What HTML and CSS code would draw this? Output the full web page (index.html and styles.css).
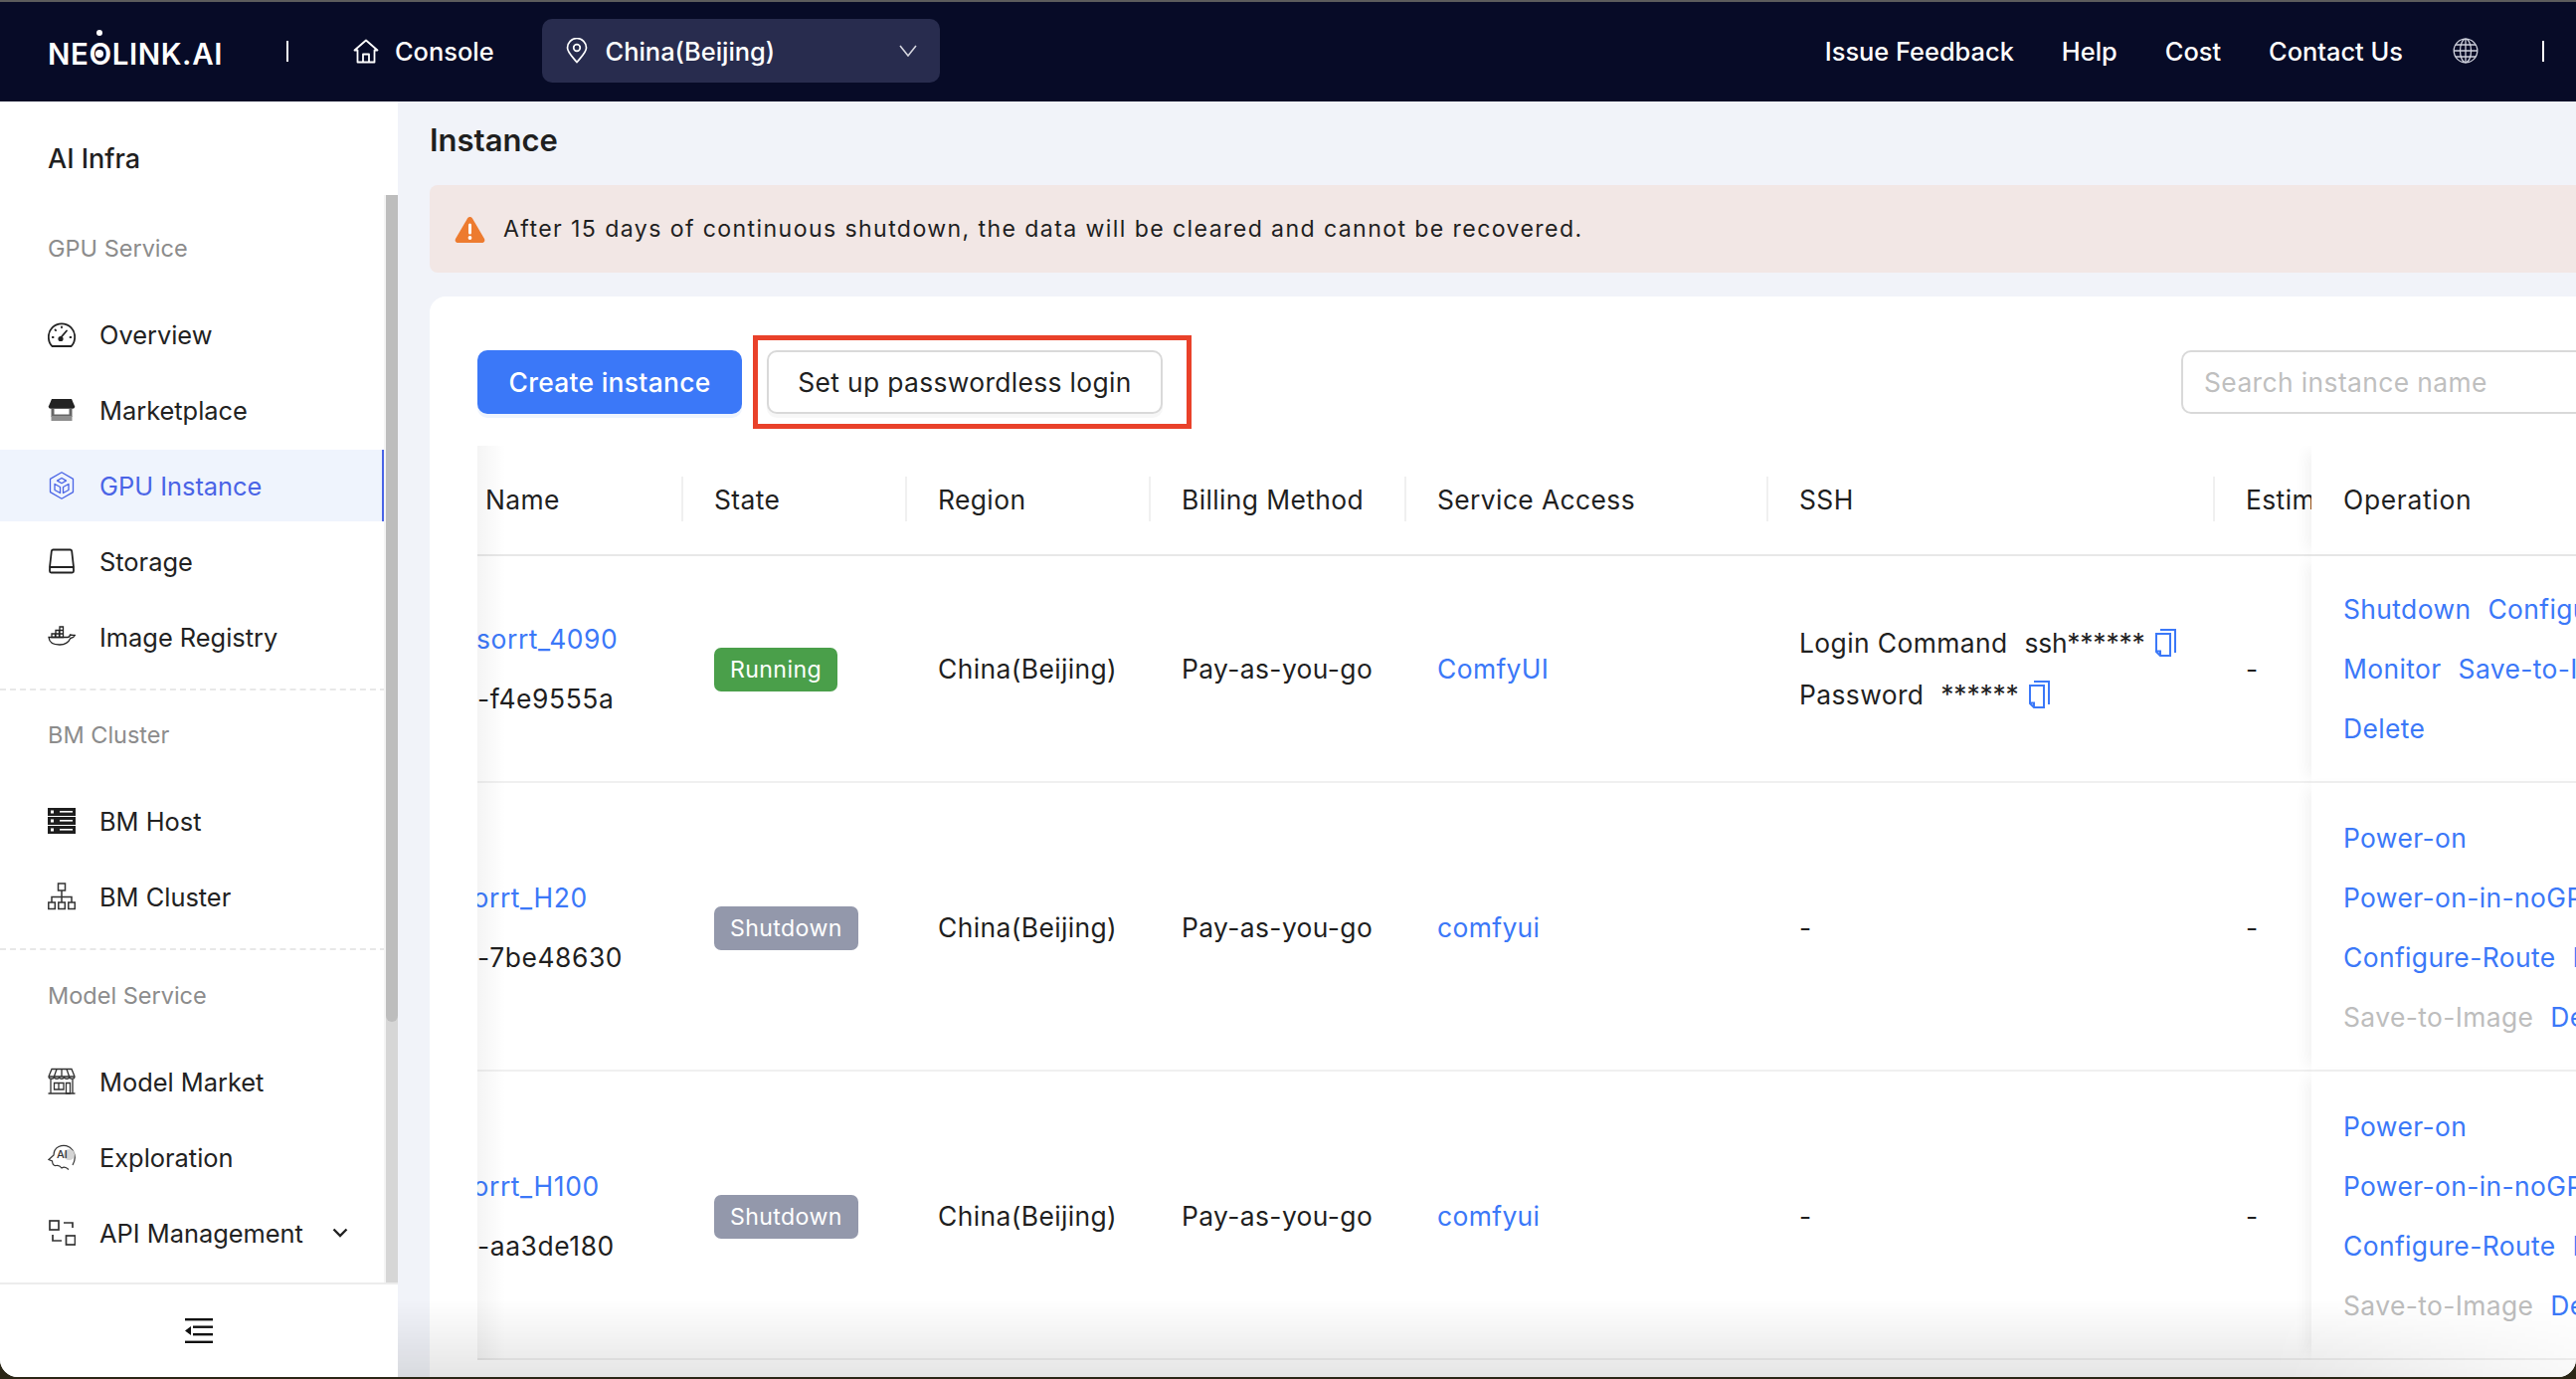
FILE: index.html
```html
<!DOCTYPE html>
<html lang="en">
<head>
<meta charset="utf-8">
<title>Instance</title>
<link rel="stylesheet" href="styles.css">
</head>
<body>
<div class="shell">
  <header class="topbar">
    <div class="logo">NEOLINK.AI<span class="logo-dot-top"></span><span class="logo-dot-mid"></span></div>
    <span class="vline vline-a"></span>
    <a class="console">
      <svg class="ic-home" viewBox="0 0 26 25" fill="none" stroke="#fff" stroke-width="1.8" stroke-linejoin="round"><path d="M1.5 11.5 13 1.5l11.5 10H21.5v12h-17v-12z"/><path d="M10 23.5v-8h6v8"/></svg>
      <span>Console</span>
    </a>
    <div class="region-select">
      <svg class="ic-pin" viewBox="0 0 22 26" fill="none" stroke="#fff" stroke-width="1.7"><path d="M11 24.5C6 18.5 1.5 14.5 1.5 10a9.500 9.500 0 0 1 19 0c0 4.500-4.500 8.500-9.500 14.500z"/><circle cx="11" cy="10" r="3.300"/></svg>
      <span class="region-text">China(Beijing)</span>
      <svg class="ic-chev" viewBox="0 0 18 12" fill="none" stroke="#d5d6de" stroke-width="1.600"><path d="M1 1l8 10 8-10"/></svg>
    </div>
    <nav class="topnav">
      <a>Issue Feedback</a><a>Help</a><a>Cost</a><a>Contact Us</a>
      <svg class="ic-globe" viewBox="0 0 26 26" fill="none" stroke="#cfd1dc" stroke-width="1.300"><circle cx="13" cy="13" r="11.800"/><ellipse cx="13" cy="13" rx="5.500" ry="11.800"/><path d="M13 1.200v23.600M1.200 13h23.600M3 7h20M3 19h20"/></svg>
      <span class="vline vline-b"></span>
    </nav>
  </header>

  <div class="body-row">
    <aside class="sidebar">
      <div class="side-title">AI Infra</div>
      <div class="side-scroll">
        <div class="menu">
          <section class="group group-first">
            <h3 class="group-label">GPU Service</h3>
            <a class="item">
              <svg class="ic" viewBox="0 0 28 28" fill="none" stroke="#222" stroke-width="1.800" stroke-linecap="round"><path d="M4.500 26h19c2.800-2.500 3.700-5.500 3.700-9.500a13.200 13.200 0 0 0-26.400 0c0 4 .9 7 3.700 9.500z"/><path d="M12.500 18 19 10.500M14 6.500v.8M7.500 9.500l.6.600M4.800 17h.8M22.500 17h.8"/><circle cx="13" cy="18.500" r="1.700" fill="#222"/></svg>
              <span>Overview</span>
            </a>
            <a class="item">
              <svg class="ic" viewBox="0 0 28 28"><path d="M4 3h20l3.200 7.500c0 1.500-1 2.200-2.200 2.200H3c-1.200 0-2.200-.7-2.200-2.200z" fill="#222"/><path d="M3.500 13h3v5.500h15V13h3v8h-21z" fill="#666"/><rect x="3.500" y="20" width="21" height="5" fill="#8e8e8e"/></svg>
              <span>Marketplace</span>
            </a>
            <a class="item active">
              <svg class="ic" viewBox="0 0 28 28" fill="none" stroke="#4a64e6" stroke-width="1.300" stroke-linejoin="round"><path d="M14 .8 25.500 7.400v13.200L14 27.200 2.500 20.600V7.400z"/><path d="M14 6.500l4.500 2.600L14 11.700 9.500 9.100zM7 12.500l5.500 3v6L7 18.500zM21 12.500l-5.500 3v6l5.500-3z"/></svg>
              <span>GPU Instance</span>
            </a>
            <a class="item">
              <svg class="ic" viewBox="0 0 28 28" fill="none" stroke="#222" stroke-width="1.800" stroke-linejoin="round"><path d="M5.500 2.500h17c1 0 1.500.5 1.700 1.500l1.800 16H2L3.800 4c.2-1 .7-1.500 1.700-1.500z"/><rect x="2" y="20" width="24" height="5.500" rx="1.500"/></svg>
              <span>Storage</span>
            </a>
            <a class="item">
              <svg class="ic" viewBox="0 0 28 28" fill="none" stroke="#222" stroke-width="1.300"><path d="M1 14.500h19c1.500 0 2.200-1 2.500-2.500 1.500.3 3.500.3 4.800.5-1 2.200-2.800 2.800-4.500 3-1.800 4-5.500 6.500-10.800 6.500C6 22 1.500 20 1 14.500z"/><path d="M4 11h3.500v3.500H4zM8 11h3.500v3.500H8zM12 11h3.500v3.500H12zM8 7.500h3.500V11H8zM12 7.500h3.500V11H12zM12 4h3.500v3.500H12z"/></svg>
              <span>Image Registry</span>
            </a>
          </section>
          <section class="group">
            <h3 class="group-label">BM Cluster</h3>
            <a class="item">
              <svg class="ic" viewBox="0 0 28 26"><g fill="#1e1e1e"><rect width="28" height="8" y="0"/><rect width="28" height="8" y="9"/><rect width="28" height="8" y="18"/></g><g fill="#fff"><rect x="3" y="2.500" width="3" height="3"/><rect x="12" y="3" width="13" height="1.600"/><rect x="3" y="11.500" width="3" height="3"/><rect x="12" y="12" width="13" height="1.600"/><rect x="3" y="20.500" width="3" height="3"/><rect x="12" y="21" width="13" height="1.600"/></g></svg>
              <span>BM Host</span>
            </a>
            <a class="item">
              <svg class="ic" viewBox="0 0 28 28" fill="none" stroke="#333" stroke-width="1.500"><rect x="10.500" y="1" width="7" height="7"/><path d="M14 8v12M4 20v-5.500h20V20"/><rect x=".8" y="20" width="6.500" height="6.500"/><rect x="10.800" y="20" width="6.500" height="6.500"/><rect x="20.800" y="20" width="6.500" height="6.500"/></svg>
              <span>BM Cluster</span>
            </a>
          </section>
          <section class="group group-last">
            <h3 class="group-label">Model Service</h3>
            <a class="item">
              <svg class="ic" viewBox="0 0 28 28" fill="none" stroke="#333" stroke-width="1.300"><path d="M4 1.500h20l3 7.500c0 3-5 3-5.300 0 0 3-5 3-5.300 0 0 3-5 3-4.800 0 0 3-5 3-5.200 0C6.200 12 1 12 1 9z"/><path d="M9 1.500 6.400 9M14 1.500V9M19 1.500 21.600 9M1 9h26M3 12v13.500M25 12v13.500M.5 26h27"/><path d="M6.500 15.500h9.500v6.500H6.500zM11 15.500V22M18.500 15.500h4V26h-4z"/></svg>
              <span>Model Market</span>
            </a>
            <a class="item">
              <svg class="ic" viewBox="0 0 28 28" fill="none" stroke="#333" stroke-width="1.200"><path d="M25 22c3-5 3-10 0-15-3-4.500-9-6-14-3.500C7 5.500 6 9 6 12l-5 4.500 3.500 1.500c.2 2.500 1 5 4 4.500 2.500-.5 4 .5 5.500 2.500 2-1.500 5-.5 7 1.500"/><circle cx="21.500" cy="11.500" r="5.500" fill="#d4d4d4" stroke="none"/><text class="ai-text" x="9" y="15">AI</text></svg>
              <span>Exploration</span>
            </a>
            <a class="item">
              <svg class="ic" viewBox="0 0 28 28" fill="none" stroke="#333" stroke-width="1.700"><rect x="2" y="2" width="9" height="9"/><path d="M16 4h9v5M5 16v6h9"/><rect x="18.500" y="17" width="9" height="9"/></svg>
              <span>API Management</span>
              <svg class="ic-caret" viewBox="0 0 16 10" fill="none" stroke="#222" stroke-width="2.400"><path d="M1.500 1.500 8 8l6.500-6.500"/></svg>
            </a>
          </section>
        </div>
        <div class="scrollbar"><div class="thumb"></div><div class="track"></div></div>
      </div>
      <div class="side-foot">
        <svg class="ic-collapse" viewBox="0 0 28 25" fill="#111"><rect width="28" height="2.400"/><rect y="22.600" width="28" height="2.400"/><rect x="8" y="7.500" width="20" height="2.400"/><rect x="8" y="15" width="20" height="2.400"/><path d="M0 12.500 6 8v9z"/></svg>
      </div>
    </aside>

    <main class="content">
      <h1 class="page-title">Instance</h1>
      <div class="alert">
        <svg class="ic-warn" viewBox="0 0 31 27"><path d="M13 2.500c1.200-2 3.800-2 5 0l12 20.500c1 2-.3 4-2.500 4h-24C1.300 27 0 25 1 23z" fill="#ed7b2f"/><rect x="14" y="7.500" width="3" height="11" rx="1.500" fill="#fff"/><circle cx="15.500" cy="22" r="1.900" fill="#fff"/></svg>
        <span>After 15 days of continuous shutdown, the data will be cleared and cannot be recovered.</span>
      </div>
      <section class="card">
        <div class="toolbar">
          <div class="actions">
            <button class="btn btn-primary">Create instance</button>
            <span class="btn-wrap"><button class="btn btn-default">Set up passwordless login</button><span class="callout"></span></span>
          </div>
          <input class="search" placeholder="Search instance name">
        </div>
        <div class="table-wrap">
          <table class="grid">
            <colgroup><col class="c-name"><col class="c-state"><col class="c-region"><col class="c-bill"><col class="c-svc"><col class="c-ssh"><col class="c-est"><col class="c-op"></colgroup>
            <thead>
              <tr>
                <th class="th-name">Name</th><th>State</th><th>Region</th><th>Billing Method</th><th>Service Access</th><th>SSH</th><th>Estimated</th><th class="op op-th">Operation</th>
              </tr>
            </thead>
            <tbody>
              <tr class="r-a">
                <td class="name"><a class="link nm-a">sorrt_4090</a><div class="hash">-f4e9555a</div></td>
                <td><span class="tag tag-run">Running</span></td>
                <td>China(Beijing)</td>
                <td>Pay-as-you-go</td>
                <td><a class="link">ComfyUI</a></td>
                <td>
                  <div class="ssh-line"><span>Login Command</span><span class="stars">ssh******</span>
                    <svg class="ic-copy" viewBox="0 0 22 28" fill="none" stroke="#3b78f8" stroke-width="2"><path d="M6 1h15v23M2 5h14v22H6l-4-4z"/><path d="M2 22.500h4V27"/></svg></div>
                  <div class="ssh-line"><span>Password</span><span class="stars">******</span>
                    <svg class="ic-copy" viewBox="0 0 22 28" fill="none" stroke="#3b78f8" stroke-width="2"><path d="M6 1h15v23M2 5h14v22H6l-4-4z"/><path d="M2 22.500h4V27"/></svg></div>
                </td>
                <td>-</td>
                <td class="op">
                  <div class="op-line"><a class="link">Shutdown</a><a class="link">Configure-Route</a></div>
                  <div class="op-line"><a class="link">Monitor</a><a class="link">Save-to-Image</a></div>
                  <div class="op-line"><a class="link">Delete</a></div>
                </td>
              </tr>
              <tr class="r-b">
                <td class="name"><a class="link nm-b">sorrt_H20</a><div class="hash">-7be48630</div></td>
                <td><span class="tag tag-off">Shutdown</span></td>
                <td>China(Beijing)</td>
                <td>Pay-as-you-go</td>
                <td><a class="link">comfyui</a></td>
                <td>-</td>
                <td>-</td>
                <td class="op">
                  <div class="op-line"><a class="link">Power-on</a></div>
                  <div class="op-line"><a class="link">Power-on-in-noGPU</a></div>
                  <div class="op-line"><a class="link">Configure-Route</a><a class="link">Monitor</a></div>
                  <div class="op-line"><a class="muted">Save-to-Image</a><a class="link">Delete</a></div>
                </td>
              </tr>
              <tr class="r-b">
                <td class="name"><a class="link nm-b">sorrt_H100</a><div class="hash">-aa3de180</div></td>
                <td><span class="tag tag-off">Shutdown</span></td>
                <td>China(Beijing)</td>
                <td>Pay-as-you-go</td>
                <td><a class="link">comfyui</a></td>
                <td>-</td>
                <td>-</td>
                <td class="op">
                  <div class="op-line"><a class="link">Power-on</a></div>
                  <div class="op-line"><a class="link">Power-on-in-noGPU</a></div>
                  <div class="op-line"><a class="link">Configure-Route</a><a class="link">Monitor</a></div>
                  <div class="op-line"><a class="muted">Save-to-Image</a><a class="link">Delete</a></div>
                </td>
              </tr>
            </tbody>
          </table>
        </div>
      </section>
      <div class="bottom-fade"></div>
    </main>
  </div>
</div>
</body>
</html>
```

FILE: styles.css
```css
* { box-sizing: border-box; }
html, body { margin: 0; height: 100%; overflow: hidden; }
body {
  width: 2590px;
  height: 1386px;
  padding-top: 2px;
  background: linear-gradient(to bottom, #5c5c5c 0, #5c5c5c 2px, #2b2616 2px, #2b2616 100%);
  font-family: Inter, "Noto Sans", sans-serif;
  font-size: 26.4px;
  color: #1f1f1f;
}
.shell {
  height: 1382px;
  display: flex;
  flex-direction: column;
  border-radius: 0 0 18px 18px;
  overflow: hidden;
  background: #f1f3f9;
}

/* top bar */
.topbar {
  height: 100px;
  flex: none;
  display: flex;
  align-items: center;
  background: #070b27;
  color: #fff;
  padding: 0 0 2px 48px;
  font-size: 25.4px;
}
.logo {
  position: relative;
  width: 174px;
  font-weight: 600;
  font-size: 29.5px;
  letter-spacing: .6px;
  line-height: 1;
  white-space: nowrap;
  margin-top: 8px;
}
.logo-dot-top, .logo-dot-mid { position: absolute; background: #fff; border-radius: 50%; }
.logo-dot-top { left: 49px; top: -10px; width: 6px; height: 6px; }
.logo-dot-mid { left: 48px; top: 10px; width: 8px; height: 8px; }
.vline { display: block; width: 2px; height: 21px; background: #fff; flex: none; }
.vline-a { margin-left: 66px; }
.console { display: flex; align-items: center; gap: 16px; margin-left: 65px; font-weight: 500; }
.ic-home { width: 26px; height: 25px; }
.region-select {
  width: 400px;
  height: 64px;
  margin-left: 48px;
  padding: 0 23px 0 24px;
  display: flex;
  align-items: center;
  border-radius: 10px;
  background: #282c4e;
  font-weight: 500;
}
.ic-pin { width: 22px; height: 26px; }
.region-text { margin-left: 18px; }
.ic-chev { width: 18px; height: 12px; margin-left: auto; }
.topnav { margin-left: auto; display: flex; align-items: center; gap: 48px; padding-right: 32px; font-weight: 500; }
.ic-globe { width: 26px; height: 26px; margin-left: 2px; }
.vline-b { margin-left: 16px; }

/* layout */
.body-row { flex: 1; display: flex; min-height: 0; }
.sidebar { width: 400px; flex: none; background: #fff; display: flex; flex-direction: column; }
.side-title { height: 94px; flex: none; padding: 39px 0 0 48px; font-weight: 500; font-size: 27px; line-height: 38px; color: #1f1f1f; }
.side-scroll { flex: 1; min-height: 0; display: flex; }
.menu { width: 386px; flex: none; }
.group { padding: 23px 0 16px; border-bottom: 2px dashed #e8e8e8; margin-right: -2px; }
.group-first { padding-top: 32px; }
.group-last { padding-top: 24px; border-bottom: 0; padding-bottom: 0; }
.group-label { margin: 0 0 28px 48px; height: 44px; line-height: 44px; font-size: 23.5px; font-weight: 400; color: #8c8c8c; }
.item { height: 72px; margin-top: 4px; display: flex; align-items: center; padding-left: 48px; color: #222; font-size: 25.4px; }
.group-label + .item { margin-top: 0; }
.item.active { background: #eff4fd; color: #4a64e6; border-right: 4px solid #4a64e6; }
.ic { width: 28px; height: 28px; flex: none; margin-right: 24px; }
.ai-text { font-family: Inter, sans-serif; font-size: 11px; font-weight: 500; fill: #333; stroke: none; }
.ic-caret { width: 16px; height: 10px; margin-left: 29px; }
.scrollbar { width: 14px; flex: none; display: flex; flex-direction: column; border-left: 2px solid #f4f4f4; }
.thumb { position: relative; z-index: 1; height: 831px; background: #bdbdbd; border-radius: 0 0 6px 6px; }
.track { position: relative; z-index: 0; flex: 1; background: #d6d6d6; margin-top: -6px; }
.side-foot { height: 95px; flex: none; border-top: 2px solid #ececec; display: flex; align-items: center; justify-content: center; }
.ic-collapse { width: 28px; height: 25px; }

/* content */
.content { position: relative; flex: 1; min-width: 0; padding-left: 32px; overflow: hidden; }
.page-title { margin: 0; height: 84px; display: flex; align-items: center; padding-bottom: 8px; font-size: 31px; font-weight: 600; color: #1f1f1f; }
.alert {
  width: 2300px;
  height: 88px;
  display: flex;
  align-items: center;
  padding-left: 25px;
  gap: 18px;
  background: #f2e7e5;
  border-radius: 8px;
  font-size: 23.1px;
  letter-spacing: 1.4px;
  color: #1f1f1f;
}
.ic-warn { width: 31px; height: 27px; flex: none; }
.card { width: 2230px; height: 1100px; margin-top: 24px; padding: 54px 48px 0; background: #fff; border-radius: 16px; }
.toolbar { height: 64px; display: flex; justify-content: space-between; align-items: center; }
.actions { display: flex; gap: 25px; }
.btn { height: 64px; font: inherit; border-radius: 10px; cursor: pointer; white-space: nowrap; }
.btn-primary { width: 266px; border: 0; background: #3b78f8; color: #fff; box-shadow: 0 4px 0 #eef4fe; font-weight: 500; letter-spacing: .3px; }
.btn-default { width: 398px; border: 2px solid #d9d9d9; background: #fff; color: #1f1f1f; box-shadow: 0 4px 0 #f7f7f7; font-weight: 400; letter-spacing: .35px; }
.btn-wrap { position: relative; display: block; }
.callout { position: absolute; left: -14px; right: -29px; top: -15px; bottom: -15px; border: 5px solid #e9412a; pointer-events: none; }
.search { width: 421px; height: 64px; border: 2px solid #d9d9d9; border-radius: 10px; padding: 0 21px; font: inherit; letter-spacing: .4px; color: #1f1f1f; background: #fff; outline: 0; }
.search::placeholder { color: #bfbfbf; opacity: 1; }

/* table */
.table-wrap { position: relative; margin-top: 32px; overflow: hidden; }
.table-wrap::before { content: ""; position: absolute; left: 0; top: 0; bottom: 0; width: 28px; background: linear-gradient(to right, rgba(0,0,0,.045), rgba(0,0,0,0)); z-index: 3; pointer-events: none; }
.grid { table-layout: fixed; width: 2134px; border-collapse: separate; border-spacing: 0; letter-spacing: .4px; }
.c-name { width: 205px; }
.c-state { width: 225px; }
.c-region { width: 245px; }
.c-bill { width: 257px; }
.c-svc { width: 364px; }
.c-ssh { width: 449px; }
.c-est { width: 99px; }
.c-op { width: 290px; }
th, td { text-align: left; padding: 2px 0 0 33px; vertical-align: middle; white-space: nowrap; border-bottom: 2px solid #f0f0f0; overflow: hidden; }
th { position: relative; height: 111px; padding-top: 0; padding-bottom: 2px; font-weight: 400; color: #1f1f1f; border-bottom-color: #e8e8e8; }
th::before { content: ""; position: absolute; left: 0; top: 31px; height: 45px; width: 2px; background: #f0f0f0; }
th.th-name { padding-left: 8px; }
th.th-name::before, th.op-th::before { display: none; }
th.op-th { letter-spacing: .7px; }
.r-a td { height: 228px; padding-top: 0; }
.r-b td { height: 290px; }
td.name { padding: 2px 0 0; letter-spacing: .6px; }
.r-a td.name { padding-top: 0; }
.hash { line-height: 60px; }
.link { color: #3b78f8; display: block; line-height: 60px; }
td > .link { display: inline-block; }
.name .link { display: block; }
.nm-a { margin-left: -1px; }
.nm-b { margin-left: -19px; }
.muted { color: #bdbdbd; }
.tag { display: inline-flex; vertical-align: middle; align-items: center; height: 44px; margin-top: 2px; padding: 0 16px; border-radius: 7px; color: #fff; font-size: 23.1px; }
.tag-run { background: #4a9f4a; }
.tag-off { background: #9398ab; }
.ssh-line { display: flex; align-items: center; gap: 17px; height: 52px; }
.stars { letter-spacing: -.2px; }
.ic-copy { width: 22px; height: 28px; margin-left: -7px; }
.op { position: relative; background: #fff; box-shadow: -10px 0 14px -6px rgba(0,0,0,.06); padding-left: 32px; overflow: visible; z-index: 2; }
.op-line { display: flex; gap: 17px; height: 60px; align-items: center; }
.op-line .link { line-height: normal; }

.bottom-fade {
  position: absolute;
  left: -4px;
  right: 0;
  bottom: 0;
  height: 78px;
  background: linear-gradient(to bottom, rgba(0,0,0,0), rgba(0,0,0,.1));
  -webkit-mask-image: linear-gradient(to right, #000 86%, rgba(0,0,0,.25) 100%);
  mask-image: linear-gradient(to right, #000 86%, rgba(0,0,0,.25) 100%);
  pointer-events: none;
  z-index: 5;
}
```
